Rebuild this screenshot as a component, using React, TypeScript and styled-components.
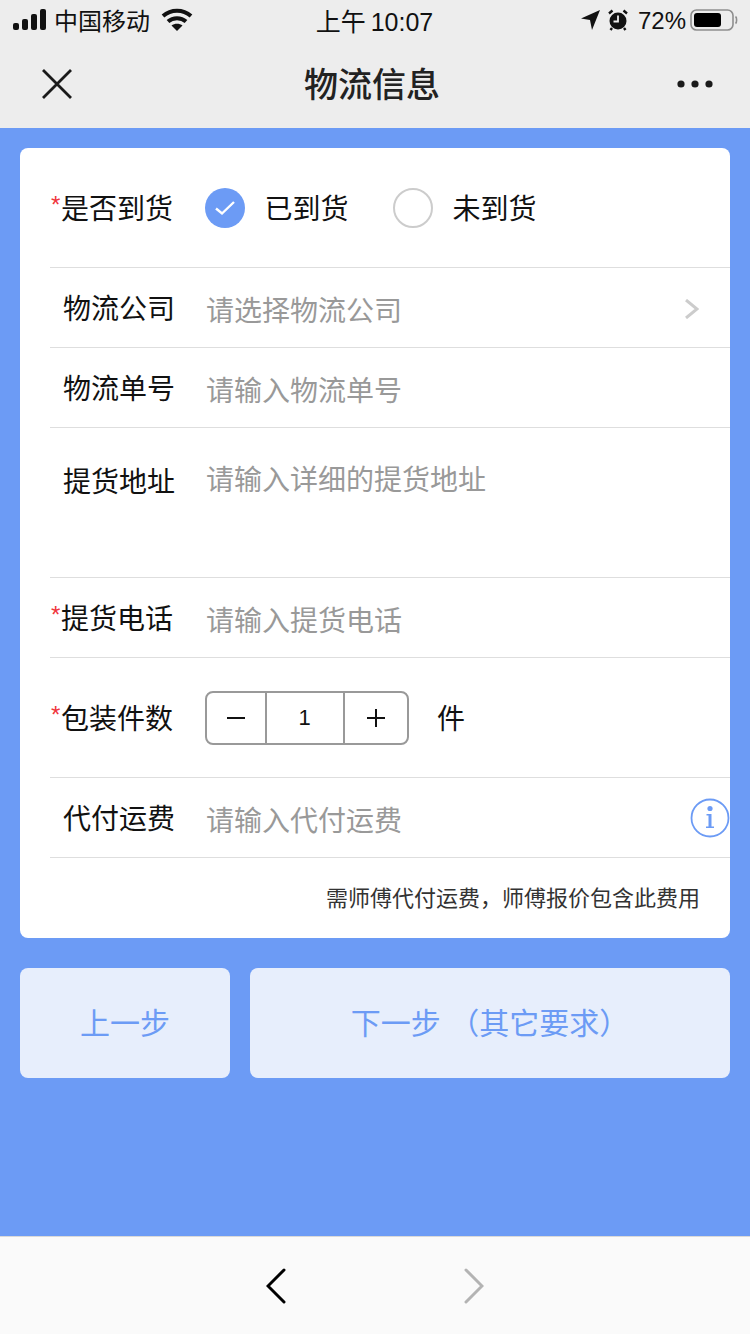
import React from "react";
import styled, { createGlobalStyle } from "styled-components";

const BLUE = "#6c9bf5";

const GlobalStyle = createGlobalStyle`
  html, body {
    margin: 0;
    padding: 0;
    background: ${BLUE};
  }
  * {
    box-sizing: border-box;
  }
`;

const Page = styled.div`
  width: 750px;
  height: 1334px;
  display: flex;
  flex-direction: column;
  background: ${BLUE};
  font-family: "Liberation Sans", "Noto Sans CJK SC", sans-serif;
  overflow: hidden;
`;

const Header = styled.header`
  height: 128px;
  flex: none;
  background: #ededed;
  color: #1a1a1a;
`;

const StatusBar = styled.div`
  height: 42px;
  padding: 0 12px 3px 13px;
  display: grid;
  grid-template-columns: 1fr auto 1fr;
  align-items: center;
  font-size: 24px;
  color: #111;
`;

const StatusLeft = styled.div`
  display: flex;
  align-items: center;
  gap: 7px;
`;

const Carrier = styled.span`
  margin-right: 4px;
`;

const StatusTime = styled.div`
  font-size: 25px;
  word-spacing: -2px;
  transform: translateX(-1px);
`;

const StatusRight = styled.div`
  display: flex;
  align-items: center;
  justify-content: flex-end;
  gap: 7px;
`;

const Percent = styled.span`
  margin: 0 -3px 0 3px;
  padding-top: 3px;
`;

const NavBar = styled.div`
  height: 86px;
  padding: 0 36px 3px 40px;
  display: flex;
  align-items: center;
  justify-content: space-between;
`;

const NavTitle = styled.h1`
  margin: 0;
  font-size: 34px;
  font-weight: 500;
  color: #222;
  transform: translate(-3px, -1px);
`;

const Content = styled.main`
  flex: 1;
  padding: 20px 20px 0;
`;

const Card = styled.section`
  height: 790px;
  padding-left: 30px;
  background: #fff;
  border-radius: 8px;
  display: flex;
  flex-direction: column;
`;

const Row = styled.div<{ $height: number; $top?: boolean }>`
  height: ${({ $height }) => $height}px;
  flex: none;
  display: flex;
  align-items: ${({ $top }) => ($top ? "flex-start" : "center")};
  padding-top: ${({ $top }) => ($top ? "35px" : "0")};
  border-bottom: 1px solid #dedede;
`;

const LastRow = styled.div`
  flex: 1;
  display: flex;
  align-items: center;
  justify-content: flex-end;
  padding: 0 30px 4px 0;
  font-size: 22px;
  color: #333;
`;

const Label = styled.label<{ $required?: boolean; $top?: boolean }>`
  width: 156px;
  flex: none;
  padding-left: ${({ $required }) => ($required ? "1px" : "13px")};
  padding-top: ${({ $top }) => ($top ? "2px" : "4px")};
  display: flex;
  font-size: 28px;
  line-height: 36px;
  color: #111;
`;

const Star = styled.span`
  width: 10px;
  color: #f0343c;
  font-size: 24px;
  line-height: 26px;
`;

const Placeholder = styled.span<{ $top?: boolean }>`
  flex: 1;
  padding-top: ${({ $top }) => ($top ? "0" : "8px")};
  font-size: 28px;
  line-height: 36px;
  color: #999;
`;

const RadioGroup = styled.div`
  display: flex;
  align-items: center;
  margin-left: -1px;
`;

const RadioCircle = styled.span<{ $checked?: boolean }>`
  width: 40px;
  height: 40px;
  border-radius: 50%;
  display: flex;
  align-items: center;
  justify-content: center;
  background: ${({ $checked }) => ($checked ? BLUE : "#fff")};
  border: ${({ $checked }) => ($checked ? "none" : "2px solid #ccc")};
`;

const RadioText = styled.span`
  margin-left: 19.5px;
  width: 128.5px;
  padding-bottom: 2px;
  font-size: 28px;
  color: #111;
`;

const Stepper = styled.div`
  width: 204px;
  height: 54px;
  margin-left: -1px;
  display: flex;
  border: 2px solid #999;
  border-radius: 8px;
`;

const StepCell = styled.div<{ $width: number; $divider?: boolean }>`
  width: ${({ $width }) => $width}px;
  padding-right: ${({ $divider }) => ($divider ? "1px" : "0")};
  display: flex;
  align-items: center;
  justify-content: center;
  font-size: 22px;
  color: #111;
  border-left: ${({ $divider }) => ($divider ? "2px solid #999" : "none")};
`;

const Unit = styled.span`
  margin-left: 28px;
  padding-bottom: 2px;
  font-size: 28px;
  color: #111;
`;

const Chevron = styled.div`
  width: 45px;
  padding-top: 2px;
  display: flex;
`;

const InfoIcon = styled.div`
  width: 40px;
  height: 40px;
  display: flex;
`;

const Buttons = styled.div`
  margin-top: 30px;
  display: flex;
  gap: 20px;
`;

const StepButton = styled.button<{ $width: number }>`
  width: ${({ $width }) => $width}px;
  height: 110px;
  padding: 0 0 4px;
  border: none;
  border-radius: 8px;
  background: #e7eefc;
  color: ${BLUE};
  font-family: inherit;
  font-size: 30px;
`;

const BottomBar = styled.footer`
  height: 98px;
  flex: none;
  background: #fafafa;
  border-top: 1px solid #d9d9d9;
  display: flex;
  align-items: center;
  justify-content: center;
  gap: 178px;
`;

const CheckIcon = () => (
  <svg width="22" height="16" viewBox="0 0 22 16" fill="none">
    <path d="M2 8.5 L8 13.5 L20 2" stroke="#fff" strokeWidth="2.4" />
  </svg>
);

const Signal = () => (
  <svg width="34" height="22" viewBox="0 0 34 22" fill="#111">
    <rect x="0" y="14" width="6" height="7" rx="2" />
    <rect x="9" y="10" width="6" height="11" rx="2" />
    <rect x="18" y="5" width="6" height="16" rx="2" />
    <rect x="27" y="0" width="6" height="21" rx="2" />
  </svg>
);

const Wifi = () => (
  <svg width="32" height="24" viewBox="0 0 32 24" fill="none" stroke="#111" strokeWidth="4">
    <path d="M2 8 C10 1 22 1 30 8" />
    <path d="M7 13.5 C12 9 20 9 25 13.5" />
    <path d="M16 23 L10.5 17.5 C13.5 15 18.5 15 21.5 17.5 Z" fill="#111" stroke="none" />
  </svg>
);

const Location = () => (
  <svg width="20" height="22" viewBox="0 0 20 22" fill="#111">
    <path d="M19 1 L11 21 L9 11 L0 9.5 Z" />
  </svg>
);

const Alarm = () => (
  <svg width="20" height="22" viewBox="0 0 20 22">
    <circle cx="10" cy="12" r="8.5" fill="#111" />
    <path d="M10 6.5 V12.5 H5.5" fill="none" stroke="#ededed" strokeWidth="1.8" />
    <path d="M1 4.5 L4.5 1.5 M19 4.5 L15.5 1.5 M4 19 L2.5 21 M16 19 L17.5 21" stroke="#111" strokeWidth="2.4" />
  </svg>
);

const Battery = () => (
  <svg width="48" height="24" viewBox="0 0 48 24">
    <rect x="1" y="2" width="42" height="20" rx="5.5" fill="none" stroke="#8e8e8e" strokeWidth="1.6" />
    <rect x="4" y="5" width="27" height="14" rx="3" fill="#000" />
    <path d="M45.5 8.5 C47 9.5 47 14.5 45.5 15.5" fill="none" stroke="#8e8e8e" strokeWidth="1.6" />
  </svg>
);

const CloseIcon = () => (
  <svg width="34" height="34" viewBox="0 0 34 34" stroke="#1a1a1a" strokeWidth="2.8">
    <path d="M3 3 L31 31 M31 3 L3 31" />
  </svg>
);

const MoreIcon = () => (
  <svg width="38" height="10" viewBox="0 0 38 10" fill="#1a1a1a">
    <circle cx="5" cy="5" r="3.6" />
    <circle cx="19" cy="5" r="3.6" />
    <circle cx="33" cy="5" r="3.6" />
  </svg>
);

const ArrowRight = () => (
  <svg width="14" height="20" viewBox="0 0 14 20" fill="none" stroke="#ccc" strokeWidth="3">
    <path d="M1 1 L12 10 L1 19" />
  </svg>
);

const Info = () => (
  <svg width="40" height="40" viewBox="0 0 40 40" fill={BLUE}>
    <circle cx="20" cy="20" r="18.5" fill="none" stroke={BLUE} strokeWidth="1.8" />
    <circle cx="20" cy="10.5" r="2.6" />
    <path d="M16.5 16 H21.5 V28.5 H24 V30 H16 V28.5 H18.5 V17.5 H16.5 Z" />
  </svg>
);

const NavArrow = ({ back }: { back?: boolean }) => (
  <svg width="20" height="36" viewBox="0 0 20 36" fill="none" stroke={back ? "#000" : "#b3b3b3"} strokeWidth="3" strokeLinecap="round">
    <path d={back ? "M18 2 L2 18 L18 34" : "M2 2 L18 18 L2 34"} />
  </svg>
);

export default function App() {
  return (
    <Page>
      <GlobalStyle />
      <Header>
        <StatusBar>
          <StatusLeft>
            <Signal />
            <Carrier>中国移动</Carrier>
            <Wifi />
          </StatusLeft>
          <StatusTime>上午 10:07</StatusTime>
          <StatusRight>
            <Location />
            <Alarm />
            <Percent>72%</Percent>
            <Battery />
          </StatusRight>
        </StatusBar>
        <NavBar>
          <CloseIcon />
          <NavTitle>物流信息</NavTitle>
          <MoreIcon />
        </NavBar>
      </Header>
      <Content>
        <Card>
          <Row $height={120}>
            <Label $required>
              <Star>*</Star>是否到货
            </Label>
            <RadioGroup>
              <RadioCircle $checked>
                <CheckIcon />
              </RadioCircle>
              <RadioText>已到货</RadioText>
              <RadioCircle />
              <RadioText>未到货</RadioText>
            </RadioGroup>
          </Row>
          <Row $height={80}>
            <Label>物流公司</Label>
            <Placeholder>请选择物流公司</Placeholder>
            <Chevron>
              <ArrowRight />
            </Chevron>
          </Row>
          <Row $height={80}>
            <Label>物流单号</Label>
            <Placeholder>请输入物流单号</Placeholder>
          </Row>
          <Row $height={150} $top>
            <Label $top>提货地址</Label>
            <Placeholder $top>请输入详细的提货地址</Placeholder>
          </Row>
          <Row $height={80}>
            <Label $required>
              <Star>*</Star>提货电话
            </Label>
            <Placeholder>请输入提货电话</Placeholder>
          </Row>
          <Row $height={120}>
            <Label $required>
              <Star>*</Star>包装件数
            </Label>
            <Stepper>
              <StepCell $width={58}>
                <svg width="18" height="2" viewBox="0 0 18 2" fill="#111">
                  <rect width="18" height="2" />
                </svg>
              </StepCell>
              <StepCell $width={78} $divider>
                1
              </StepCell>
              <StepCell $width={64} $divider>
                <svg width="18" height="18" viewBox="0 0 18 18" fill="#111">
                  <path d="M8 0 H10 V8 H18 V10 H10 V18 H8 V10 H0 V8 H8 Z" />
                </svg>
              </StepCell>
            </Stepper>
            <Unit>件</Unit>
          </Row>
          <Row $height={80}>
            <Label>代付运费</Label>
            <Placeholder>请输入代付运费</Placeholder>
            <InfoIcon>
              <Info />
            </InfoIcon>
          </Row>
          <LastRow>需师傅代付运费，师傅报价包含此费用</LastRow>
        </Card>
        <Buttons>
          <StepButton $width={210}>上一步</StepButton>
          <StepButton $width={480}>下一步 （其它要求）</StepButton>
        </Buttons>
      </Content>
      <BottomBar>
        <NavArrow back />
        <NavArrow />
      </BottomBar>
    </Page>
  );
}
